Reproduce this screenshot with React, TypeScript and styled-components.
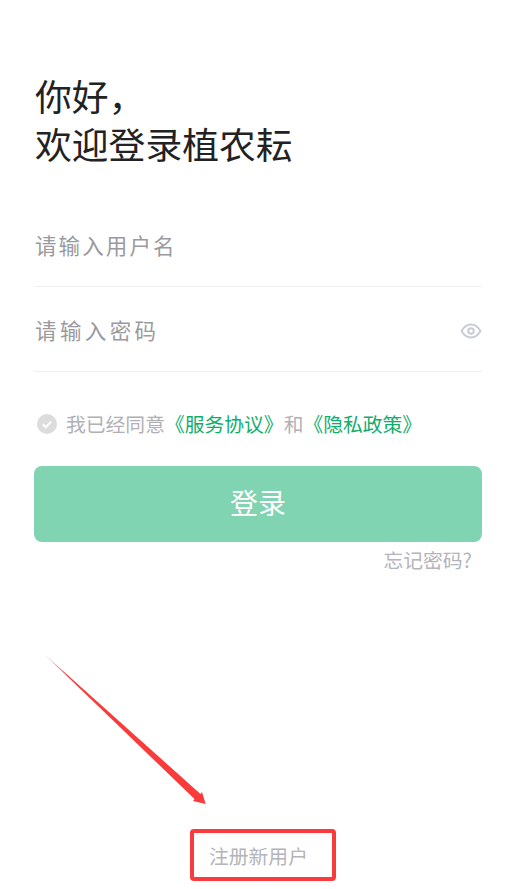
import { createGlobalStyle } from "styled-components";
import styled from "styled-components";

const GlobalStyle = createGlobalStyle`
  html, body {
    margin: 0;
    padding: 0;
    background: #fff;
  }
  body {
    font-family: "Noto Sans CJK SC", "Noto Sans", sans-serif;
  }
`;

const Page = styled.div`
  position: relative;
  box-sizing: border-box;
  width: 512px;
  height: 889px;
  padding: 71px 30px 0 34px;
  overflow: hidden;
  display: flex;
  flex-direction: column;
`;

const Title = styled.h1`
  margin: 0 0 0 1px;
  font-size: 36.8px;
  line-height: 48px;
  font-weight: 400;
  color: #222;
`;

const Form = styled.div`
  margin-top: 36px;
`;

const Field = styled.div`
  height: 84px;
  padding: 0 1px 0 1px;
  box-sizing: border-box;
  display: flex;
  align-items: center;
  justify-content: space-between;
  border-bottom: 1px solid #f0f0f2;
  margin-bottom: 1px;
`;

const Placeholder = styled.span<{ $spacing: number }>`
  font-size: 21.5px;
  line-height: 28px;
  letter-spacing: ${(p) => p.$spacing}px;
  color: #9a9a9e;
`;

const EyeIcon = styled.svg`
  margin: 2px -1px 0 0;
`;

const Agreement = styled.div`
  margin-top: 37px;
  display: flex;
  align-items: center;
  padding-left: 3px;
  font-size: 19.8px;
  line-height: 28px;
  color: #b0b0b6;
`;

const CheckIcon = styled.svg`
  width: 20px;
  height: 20px;
  margin-right: 9px;
  flex: none;
`;

const Link = styled.span`
  color: #11ad6c;
`;

const LoginButton = styled.button`
  display: block;
  width: 448px;
  height: 76px;
  margin-top: 28px;
  padding: 0 0 5px;
  border: none;
  border-radius: 8px;
  background: #80d4b1;
  color: #fff;
  font-family: inherit;
  font-size: 28px;
  line-height: 40px;
`;

const Forgot = styled.div`
  margin: 3px 10px 0 0;
  text-align: right;
  font-size: 19.8px;
  line-height: 30px;
  color: #b4b4ba;
`;

const Footer = styled.div`
  margin-top: auto;
  padding: 0 0 19px 175px;
  font-size: 19.8px;
  line-height: 28px;
  color: #b4b4ba;
`;

const Arrow = styled.svg`
  position: absolute;
  left: 40px;
  top: 650px;
`;

const Highlight = styled.div`
  position: absolute;
  left: 190px;
  top: 829px;
  width: 146px;
  height: 52px;
  box-sizing: border-box;
  border: 4px solid #fa3b3c;
  border-radius: 4px;
`;

export default function App() {
  return (
    <Page>
      <GlobalStyle />
      <Title>
        你好，
        <br />
        欢迎登录植农耘
      </Title>
      <Form>
        <Field>
          <Placeholder $spacing={2.1}>请输入用户名</Placeholder>
        </Field>
        <Field>
          <Placeholder $spacing={3.4}>请输入密码</Placeholder>
          <EyeIcon width="22" height="16" viewBox="0 0 22 16" fill="none" stroke="#c9ccd6" strokeWidth="2">
            <path d="M1.500 8C4 3.700 7.200 1.600 11 1.600S18 3.700 20.500 8C18 12.300 14.800 14.400 11 14.400S4 12.300 1.500 8Z" />
            <circle cx="11" cy="8" r="2.800" />
          </EyeIcon>
        </Field>
      </Form>
      <Agreement>
        <CheckIcon viewBox="0 0 20 20">
          <circle cx="10" cy="10" r="10" fill="#dcdcdc" />
          <path d="M5.800 10.200l3 3 5.400-5.600" fill="none" stroke="#fff" strokeWidth="2" />
        </CheckIcon>
        <span>
          我已经同意<Link>《服务协议》</Link>和<Link>《隐私政策》</Link>
        </span>
      </Agreement>
      <LoginButton>登录</LoginButton>
      <Forgot>忘记密码?</Forgot>
      <Footer>注册新用户</Footer>
      <Arrow width="172" height="160" viewBox="0 0 172 160">
        <defs>
          <linearGradient id="tail" x1="3" y1="3" x2="28" y2="26" gradientUnits="userSpaceOnUse">
            <stop offset="0" stopColor="#fa3b3c" stopOpacity="0.3" />
            <stop offset="1" stopColor="#fa3b3c" />
          </linearGradient>
        </defs>
        <path d="M3 3L160.500 144L162 142L165.700 154L153 151L154.500 149Z" fill="url(#tail)" />
      </Arrow>
      <Highlight />
    </Page>
  );
}
